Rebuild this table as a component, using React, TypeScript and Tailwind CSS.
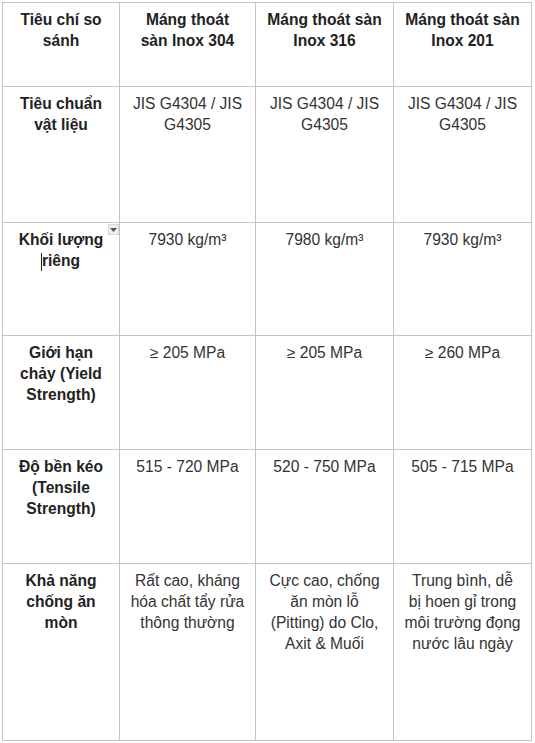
import React from "react";

const headers: string[][] = [
  ["Tiêu chí so", "sánh"],
  ["Máng thoát", "sàn Inox 304"],
  ["Máng thoát sàn", "Inox 316"],
  ["Máng thoát sàn", "Inox 201"],
];

const rows: { h: string; label: string[]; cells: string[][] }[] = [
  {
    h: "h-[135px]",
    label: ["Tiêu chuẩn", "vật liệu"],
    cells: [
      ["JIS G4304 / JIS", "G4305"],
      ["JIS G4304 / JIS", "G4305"],
      ["JIS G4304 / JIS", "G4305"],
    ],
  },
  {
    h: "h-[112px]",
    label: ["Khối lượng", "riêng"],
    cells: [["7930 kg/m³"], ["7980 kg/m³"], ["7930 kg/m³"]],
  },
  {
    h: "h-[113px]",
    label: ["Giới hạn", "chảy (Yield", "Strength)"],
    cells: [["≥ 205 MPa"], ["≥ 205 MPa"], ["≥ 260 MPa"]],
  },
  {
    h: "h-[113px]",
    label: ["Độ bền kéo", "(Tensile", "Strength)"],
    cells: [["515 - 720 MPa"], ["520 - 750 MPa"], ["505 - 715 MPa"]],
  },
  {
    h: "h-[176px]",
    label: ["Khả năng", "chống ăn", "mòn"],
    cells: [
      ["Rất cao, kháng", "hóa chất tẩy rửa", "thông thường"],
      ["Cực cao, chống", "ăn mòn lỗ", "(Pitting) do Clo,", "Axit & Muối"],
      ["Trung bình, dễ", "bị hoen gỉ trong", "môi trường đọng", "nước lâu ngày"],
    ],
  },
];

function Lines({ lines }: { lines: string[] }) {
  return (
    <>
      {lines.map((l, i) => (
        <div key={i} className="whitespace-nowrap">
          {l}
        </div>
      ))}
    </>
  );
}

export default function App() {
  return (
    <div
      className="bg-white w-[535px] h-[743px] pt-[2px] pl-[2px]"
      style={{ fontFamily: '"Liberation Sans", Arial, sans-serif' }}
    >
      <div className="grid grid-cols-[116px_135px_137px_137px] gap-px bg-[#c4c4c4] p-px w-[530px] text-[15.6px] leading-[21px]">
        {headers.map((h, i) => (
          <div
            key={i}
            className="bg-white h-[83px] pt-[6px] text-center font-bold text-[#222]"
          >
            <Lines lines={h} />
          </div>
        ))}
        {rows.map((r, ri) => (
          <React.Fragment key={ri}>
            <div
              className={`relative bg-white ${r.h} pt-[6px] text-center font-bold text-[#222]`}
            >
              {ri === 1 ? (
                <>
                  <div className="whitespace-nowrap">Khối lượng</div>
                  <div className="whitespace-nowrap">
                    <span className="relative">
                      <span className="absolute left-[-1px] top-[1px] h-[18px] w-px bg-[#222]" />
                      riêng
                    </span>
                  </div>
                  <div className="absolute left-[105px] top-[1px] w-[11px] h-[11px] border border-[#d8d8d8] bg-[#eeeeee] flex items-center justify-center">
                    <svg width="7" height="4" viewBox="0 0 7 4">
                      <path d="M0 0 H7 L3.5 4 Z" fill="#555" />
                    </svg>
                  </div>
                </>
              ) : (
                <Lines lines={r.label} />
              )}
            </div>
            {r.cells.map((c, ci) => (
              <div
                key={ci}
                className={`bg-white ${r.h} pt-[6px] text-center text-[#333]`}
              >
                <Lines lines={c} />
              </div>
            ))}
          </React.Fragment>
        ))}
      </div>
    </div>
  );
}
